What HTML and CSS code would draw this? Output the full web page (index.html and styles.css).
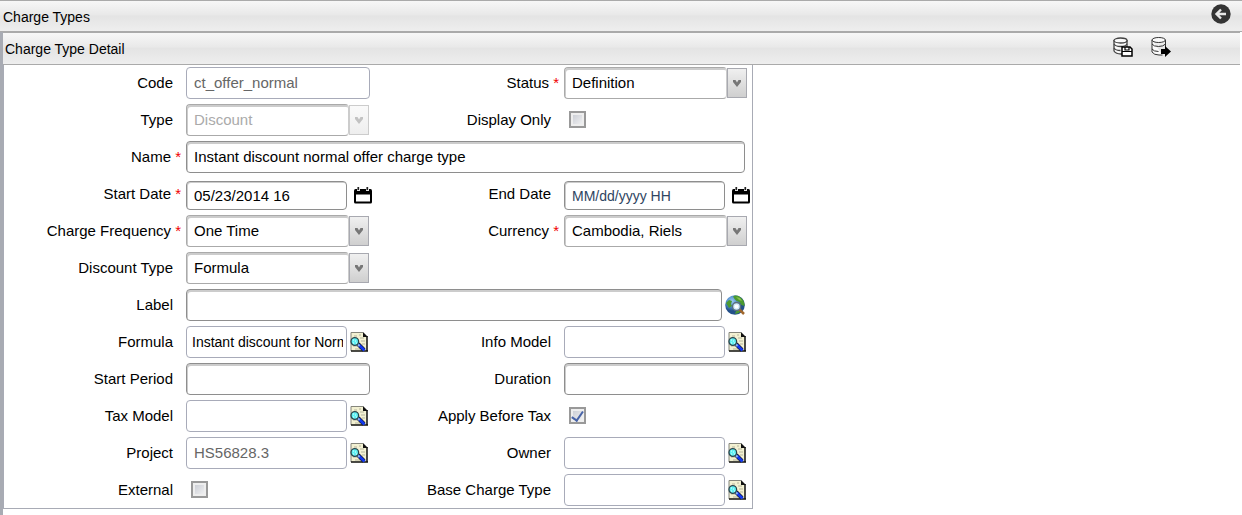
FILE: index.html
```html
<!DOCTYPE html>
<html lang="en">
<head>
<meta charset="utf-8">
<title>Charge Types</title>
<link rel="stylesheet" href="styles.css">
</head>
<body>
<svg class="sprite" aria-hidden="true">
  <symbol id="chevron" viewBox="0 0 10 10"><path d="M1 2h2.500L5 4.400 6.500 2H9v2L5 9 1 4z" fill="currentColor"/></symbol>
  <symbol id="calendar" viewBox="0 0 18 18"><path d="M1.500 3h15Q18 3 18 5v11q0 1.500-1.500 1.500h-15Q0 17.500 0 16V5Q0 3 1.500 3z" fill="#000"/><path d="M2 8.500h14v7H2z" fill="#fff"/><path d="M3 1h3v4H3zM12 1h3v4h-3z" fill="#ddd"/><path d="M3.500 1h1.500v3H3.500zM12.500 1h1.500v3h-1.500z" fill="#222"/></symbol>
  <symbol id="lookup" viewBox="0 0 18 20">
    <path d="M1 .5h12l4 4v15H1z" fill="#f3f1d2"/>
    <path d="M1 19V.5h12" fill="none" stroke="#85867c"/>
    <path d="M4 4h3M9 3h2M10 6h4M11 9h4M3 14h4M5 17h5M12 12h3" stroke="#b5b49c" fill="none"/>
    <path d="M13 0l5 5h-5z" fill="#111"/>
    <path d="M17 4v15.500M1 19h17" stroke="#111" stroke-width="1.500" fill="none"/>
    <path d="M8 12l6 6" stroke="#111" stroke-width="4"/>
    <path d="M8.500 12.500l6 6" stroke="#1238ef" stroke-width="3"/>
    <path d="M7.500 12l2 2" stroke="#8ab5ef" stroke-width="2"/>
    <circle cx="4.800" cy="9.500" r="3.800" fill="#5ff2f4" stroke="#28444d" stroke-width="1.300"/>
    <path d="M3 8h1M5 9h1M3 11h1M6 11h1" stroke="#e5ffff"/>
  </symbol>
</svg>
<header class="bar bar-main">
  <h1 class="title">Charge Types</h1>
  <button class="icon-btn" type="button" aria-label="Back"><svg width="20" height="20" viewBox="0 0 20 20"><circle cx="10" cy="10" r="9.700" fill="#343434"/><path d="M15 10H6M10 5.500L5.500 10l4.500 4.500" stroke="#e8e8e8" stroke-width="2.400" fill="none"/></svg></button>
</header>
<main class="workspace">
  <div class="bar bar-detail">
    <h2 class="title">Charge Type Detail</h2>
    <div class="tools">
      <button class="icon-btn" type="button" aria-label="Save"><svg width="20" height="20" viewBox="0 0 20 20"><g fill="#fafafa" stroke="#444" stroke-width="1.300"><path d="M1 3v11q2 3 7 3h6V3"/><ellipse cx="7.500" cy="3.500" rx="6.500" ry="2.500"/><path d="M1 7q1.500 2.500 6.500 2.500T14 7M1 11q1.500 2.500 6.500 2.500" fill="none"/></g><path d="M9 10h8l2 2v7H9z" fill="#fff" stroke="#000" stroke-width="1.500"/><path d="M12 10v3h4v-3M9 14.500h10" stroke="#000" stroke-width="1.200" fill="none"/></svg></button>
      <button class="icon-btn" type="button" aria-label="Next record"><svg width="20" height="20" viewBox="0 0 20 20"><g fill="#fafafa" stroke="#333"><path d="M1 3v12q2 3 7 3h3.500"/><path d="M14.500 3v7" fill="none"/><ellipse cx="7.700" cy="3" rx="6.700" ry="2.500"/><path d="M1 7q1.500 2.500 6.500 2.500T14.500 7M1 12q1.500 2.500 6.500 2.500" fill="none"/></g><path d="M10 12h4V9l6 5.500-6 5.500v-3h-4z" fill="#000"/></svg></button>
    </div>
  </div>
  <form class="form">
    <label class="label" for="code">Code</label>
    <div class="cell"><input class="box box-locked box-full" id="code" value="ct_offer_normal" readonly></div>
    <label class="label required" for="status">Status <span class="star">*</span></label>
    <div class="cell"><div class="combo"><select class="choice" id="status"><option>Definition</option></select><span class="frame"></span><span class="trigger"><svg width="10" height="10"><use href="#chevron"/></svg></span></div></div>

    <label class="label" for="type">Type</label>
    <div class="cell"><div class="combo combo-off"><select class="choice" id="type" disabled><option>Discount</option></select><span class="frame"></span><span class="trigger"><svg width="10" height="10"><use href="#chevron"/></svg></span></div></div>
    <label class="label" for="display">Display Only</label>
    <div class="cell cell-check"><input class="check" type="checkbox" id="display"></div>

    <label class="label required" for="name">Name <span class="star">*</span></label>
    <div class="cell cell-wide"><input class="box box-name" id="name" value="Instant discount normal offer charge type"></div>

    <label class="label required" for="start">Start Date <span class="star">*</span></label>
    <div class="cell cell-date"><input class="box box-date" id="start" value="05/23/2014 16"><button class="icon-btn" type="button" aria-label="Pick start date"><svg width="18" height="18"><use href="#calendar"/></svg></button></div>
    <label class="label" for="end">End Date</label>
    <div class="cell cell-date"><input class="box box-date" id="end" placeholder="MM/dd/yyyy HH"><button class="icon-btn" type="button" aria-label="Pick end date"><svg width="18" height="18"><use href="#calendar"/></svg></button></div>

    <label class="label required" for="frequency">Charge Frequency <span class="star">*</span></label>
    <div class="cell"><div class="combo"><select class="choice" id="frequency"><option>One Time</option></select><span class="frame"></span><span class="trigger"><svg width="10" height="10"><use href="#chevron"/></svg></span></div></div>
    <label class="label required" for="currency">Currency <span class="star">*</span></label>
    <div class="cell"><div class="combo"><select class="choice" id="currency"><option>Cambodia, Riels</option></select><span class="frame"></span><span class="trigger"><svg width="10" height="10"><use href="#chevron"/></svg></span></div></div>

    <label class="label" for="discount">Discount Type</label>
    <div class="cell cell-wide"><div class="combo"><select class="choice" id="discount"><option>Formula</option></select><span class="frame"></span><span class="trigger"><svg width="10" height="10"><use href="#chevron"/></svg></span></div></div>

    <label class="label" for="label">Label</label>
    <div class="cell cell-wide"><input class="box box-label" id="label"><button class="icon-btn" type="button" aria-label="Translate label"><svg width="20" height="20" viewBox="0 0 20 20"><defs><radialGradient id="sea" cx=".35" cy=".3"><stop offset="0" stop-color="#9bcaf2"/><stop offset=".6" stop-color="#4a87c8"/><stop offset="1" stop-color="#24508a"/></radialGradient></defs><circle cx="10" cy="10" r="9.800" fill="url(#sea)"/><path d="M8 1.500Q11-.5 15 2q5 4 4.500 9l-3-1-2-3-3-1-2-2zM1 8l3-3 3 1-1 3 1 2-3 2zM11 16l5-1-2 3-4 1z" fill="#4c9a30"/><path d="M11 2l4 1 2 3-3-1z" fill="#8ac34c"/><path d="M14 14l5 5" stroke="#a0672d" stroke-width="2.500"/><circle cx="11.500" cy="11.500" r="4" fill="#cfe8f8" stroke="#5a6f80" stroke-width="1.500"/><circle cx="11.500" cy="11.500" r="2" fill="#fff"/></svg></button></div>

    <label class="label" for="formula">Formula</label>
    <div class="cell"><input class="box box-lookup box-tight" id="formula" value="Instant discount for Normal offer"><button class="icon-btn" type="button" aria-label="Find formula"><svg width="18" height="20"><use href="#lookup"/></svg></button></div>
    <label class="label" for="info">Info Model</label>
    <div class="cell"><input class="box box-lookup" id="info"><button class="icon-btn" type="button" aria-label="Find info model"><svg width="18" height="20"><use href="#lookup"/></svg></button></div>

    <label class="label" for="period">Start Period</label>
    <div class="cell"><input class="box box-full" id="period"></div>
    <label class="label" for="duration">Duration</label>
    <div class="cell"><input class="box box-full" id="duration"></div>

    <label class="label" for="tax">Tax Model</label>
    <div class="cell"><input class="box box-lookup" id="tax"><button class="icon-btn" type="button" aria-label="Find tax model"><svg width="18" height="20"><use href="#lookup"/></svg></button></div>
    <label class="label" for="before">Apply Before Tax</label>
    <div class="cell cell-check"><input class="check" type="checkbox" id="before" checked></div>

    <label class="label" for="project">Project</label>
    <div class="cell"><input class="box box-lookup box-locked" id="project" value="HS56828.3" readonly><button class="icon-btn" type="button" aria-label="Find project"><svg width="18" height="20"><use href="#lookup"/></svg></button></div>
    <label class="label" for="owner">Owner</label>
    <div class="cell"><input class="box box-lookup" id="owner"><button class="icon-btn" type="button" aria-label="Find owner"><svg width="18" height="20"><use href="#lookup"/></svg></button></div>

    <label class="label" for="external">External</label>
    <div class="cell cell-check"><input class="check" type="checkbox" id="external"></div>
    <label class="label" for="base">Base Charge Type</label>
    <div class="cell"><input class="box box-lookup" id="base"><button class="icon-btn" type="button" aria-label="Find base charge type"><svg width="18" height="20"><use href="#lookup"/></svg></button></div>
  </form>
</main>
</body>
</html>
```
FILE: styles.css
```css
* { box-sizing: border-box; }
html, body { height: 100%; }
body {
  margin: 0;
  display: flex;
  flex-direction: column;
  background: #fff;
  color: #000;
  font: 15px "Liberation Sans", Arial, sans-serif;
}
.sprite { position: absolute; width: 0; height: 0; }
.bar {
  display: flex;
  align-items: center;
  justify-content: space-between;
  border: 1px solid #aaa;
  border-left: 0;
  border-right: 0;
  background: linear-gradient(#f7f7f7 0%, #e9e9e9 45%, #e4e4e4 50%, #eee 100%);
}
.bar-main { height: 32px; padding: 0 11px 4px 3px; flex: none; }
.bar-main .title { padding-top: 5px; }
.bar-detail { height: 33px; margin-right: 2px; padding: 0 69px 0 2px; }
.bar-detail .icon-btn { margin-bottom: 4px; }
.title { margin: 0; font-size: 14px; font-weight: normal; line-height: 18px; }
.tools { display: flex; gap: 18px; }
.icon-btn {
  display: flex;
  flex: none;
  padding: 0;
  border: 0;
  background: none;
  cursor: pointer;
}
.workspace { flex: 1 0 auto; border-left: 3px solid #a8abb3; }
.form {
  display: grid;
  grid-template-columns: 182px 184px 194px 188px;
  grid-auto-rows: minmax(32px, auto);
  row-gap: 5px;
  width: max-content;
  padding: 2px 0;
  border: 1px solid #a8abb5;
  border-top: 0;
}
.label { padding: 7px 13px 0 0; line-height: 18px; text-align: right; }
.required { padding-right: 5px; }
.star { color: #f00000; }
.cell { display: flex; align-items: center; gap: 3px; }
.cell-wide { grid-column: span 3; }
.cell-date { align-items: flex-end; gap: 7px; }
.cell-date .icon-btn { margin-bottom: 6px; }
.cell-check { padding: 0 0 2px 5px; }
.box {
  height: 32px;
  padding: 0 7px 1px;
  border: 1px solid #8e8e8e;
  border-radius: 4px;
  background: #fff;
  box-shadow: inset 1px 2px 0 #ccc;
  color: #000;
  font: inherit;
  outline: none;
}
.box-full { width: 100%; max-width: 185px; }
.box-name { width: 559px; }
.box-label { width: 536px; }
.box-date { width: 161px; height: 29px; padding-bottom: 0; box-shadow: inset 1px 1px 0 #ccc; }
.box-lookup { width: 161px; border-color: #a8abb9; box-shadow: none; }
.box-tight { padding: 0 3px 1px 5px; font-size: 14px; }
.box-locked { color: #666; border-color: #a8abb9; box-shadow: none; }
.box::placeholder { color: #2f4562; font-size: 14px; opacity: 1; }
.combo { display: grid; grid-template-columns: 163px 20px; align-items: center; }
.choice {
  grid-area: 1 / 1 / 2 / 3;
  z-index: 1;
  height: 32px;
  padding: 0 0 2px 8px;
  border: 0;
  background: none;
  appearance: none;
  color: #000;
  font: inherit;
  outline: none;
}
.frame {
  grid-area: 1 / 1;
  height: 32px;
  border: 1px solid #aaa;
  border-right-color: #ccc;
  border-radius: 4px;
  box-shadow: inset 1px 2px 0 #ccc;
}
.trigger {
  grid-area: 1 / 2;
  display: grid;
  place-items: center;
  height: 30px;
  border: 1px solid #a8a9b0;
  background: linear-gradient(#f0f0f0, #cfcfcf);
  color: #777;
}
.combo-off .choice { color: #aaa; opacity: 1; }
.combo-off .trigger { background: linear-gradient(#fafafa, #eee); border-color: #ccc; color: #c2c2c2; }
.check {
  display: grid;
  place-items: center;
  width: 17px;
  height: 17px;
  margin: 0;
  border: 2px solid #999;
  background: linear-gradient(135deg, #c5c8d0, #f6f6f6);
  box-shadow: inset 0 0 0 2px #eee;
  appearance: none;
}
.check:checked::before {
  content: "";
  width: 5px;
  height: 10px;
  margin-bottom: 3px;
  border: solid #4864a8;
  border-width: 0 2px 2px 0;
  transform: rotate(35deg);
}
```
